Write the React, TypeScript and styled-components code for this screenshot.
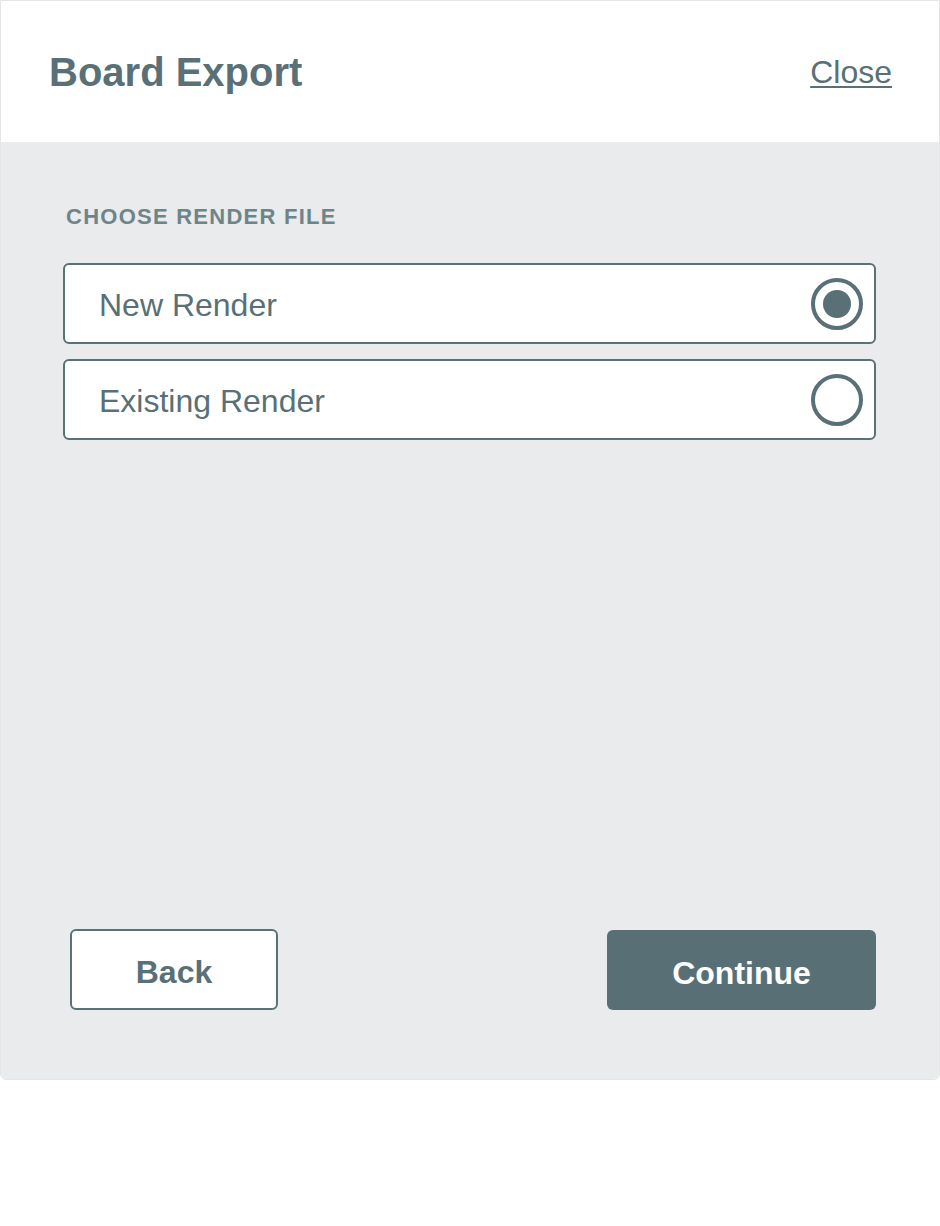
import { useState } from 'react';
import styled, { createGlobalStyle } from 'styled-components';

const GlobalStyle = createGlobalStyle`
	body {
		margin: 0;
		background: #ffffff;
		font-family: 'Liberation Sans', Arial, Helvetica, sans-serif;
	}
	* {
		box-sizing: border-box;
	}
`;

const options = ['New Render', 'Existing Render'];

const App = () => {
	const [selected, setSelected] = useState(0);

	return (
		<>
			<GlobalStyle />
			<Panel>
				<Header>
					<Title>Board Export</Title>
					<CloseLink href="#">Close</CloseLink>
				</Header>
				<Body>
					<SectionLabel>Choose render file</SectionLabel>
					<OptionList>
						{options.map((label, i) => (
							<OptionCard
								key={label}
								type="button"
								onClick={() => setSelected(i)}
							>
								<OptionText>{label}</OptionText>
								<Radio $checked={selected === i} />
							</OptionCard>
						))}
					</OptionList>
					<Footer>
						<BackButton type="button">Back</BackButton>
						<ContinueButton type="button">Continue</ContinueButton>
					</Footer>
				</Body>
			</Panel>
		</>
	);
};

export default App;

const Panel = styled.div`
	width: 940px;
	height: 1080px;
	display: flex;
	flex-direction: column;
	border: 1px solid #e3e5e7;
	border-radius: 0 0 6px 6px;
	overflow: hidden;
`;

const Header = styled.header`
	height: 141px;
	flex: 0 0 auto;
	display: flex;
	align-items: center;
	justify-content: space-between;
	padding: 2px 47px 0 48px;
	background: #ffffff;
`;

const Title = styled.h1`
	margin: 0;
	font-size: 40px;
	font-weight: 700;
	color: #587076;
`;

const CloseLink = styled.a`
	font-size: 32px;
	color: #587076;
	text-decoration: underline;
	text-underline-offset: 3px;
	text-decoration-thickness: 2px;
`;

const Body = styled.main`
	flex: 1;
	display: flex;
	flex-direction: column;
	background: #eaebed;
	padding: 62px 63px 69px 62px;
`;

const SectionLabel = styled.div`
	font-size: 22px;
	font-weight: 700;
	letter-spacing: 1.25px;
	text-transform: uppercase;
	color: #6d8589;
	margin-left: 3px;
`;

const OptionList = styled.div`
	display: flex;
	flex-direction: column;
	gap: 15px;
	margin-top: 33px;
`;

const OptionCard = styled.button`
	height: 81px;
	display: flex;
	align-items: center;
	justify-content: space-between;
	padding: 0 11px 0 34px;
	background: #ffffff;
	border: 2px solid #5a7177;
	border-radius: 6px;
	cursor: pointer;
	font-family: inherit;
	text-align: left;
`;

const OptionText = styled.span`
	font-size: 32px;
	color: #587076;
	padding-top: 4px;
`;

const Radio = styled.span<{ $checked: boolean }>`
	flex: 0 0 52px;
	width: 52px;
	height: 52px;
	border-radius: 50%;
	border: 4px solid #587076;
	display: flex;
	align-items: center;
	justify-content: center;

	&::after {
		content: '';
		display: ${(p) => (p.$checked ? 'block' : 'none')};
		width: 28px;
		height: 28px;
		border-radius: 50%;
		background: #587076;
	}
`;

const Footer = styled.div`
	margin-top: auto;
	display: flex;
	justify-content: space-between;
	align-items: flex-end;
`;

const ButtonBase = styled.button`
	height: 80px;
	padding: 6px 0 0;
	border-radius: 6px;
	font-family: inherit;
	font-size: 32px;
	font-weight: 700;
	cursor: pointer;
`;

const BackButton = styled(ButtonBase)`
	width: 208px;
	height: 81px;
	margin-left: 7px;
	background: #ffffff;
	border: 2px solid #5a7177;
	color: #587076;
`;

const ContinueButton = styled(ButtonBase)`
	width: 269px;
	background: #587075;
	border: none;
	color: #ffffff;
`;
